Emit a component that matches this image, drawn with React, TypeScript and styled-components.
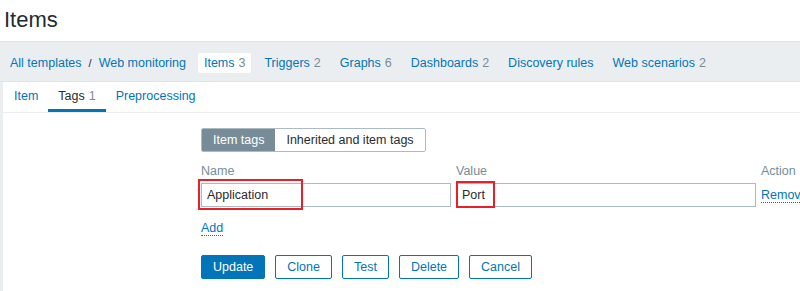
import React from 'react';
import styled, { createGlobalStyle } from 'styled-components';

const GlobalStyle = createGlobalStyle`
    html, body {
        margin: 0;
        padding: 0;
        background: #fff;
    }
    body {
        font-family: 'Liberation Sans', Arial, sans-serif;
        font-size: 12px;
        color: #1f2c33;
        overflow: hidden;
    }
`;

const Page = styled.div`
    width: 800px;
    height: 291px;
    overflow: hidden;
`;

const Header = styled.header`
    height: 41px;
    display: flex;
    align-items: center;
    padding: 0 0 2px 4px;
    box-sizing: border-box;
`;

const Title = styled.h1`
    margin: 0;
    font-size: 22px;
    font-weight: normal;
    color: #1f2c33;
`;

const NavBand = styled.nav`
    height: 41px;
    box-sizing: border-box;
    background: #ebeef0;
    border-top: 1px solid #dfe4e7;
    border-bottom: 1px solid #dfe4e7;
    display: flex;
    align-items: center;
    padding: 2px 0 0 4px;
    white-space: nowrap;
    font-size: 12.5px;
`;

const NavItem = styled.a<{ $active?: boolean; $gap?: number }>`
    display: inline-flex;
    align-items: center;
    height: 20px;
    padding: 0 6px;
    margin-right: ${(p) => (p.$gap !== undefined ? p.$gap : 7)}px;
    border-radius: 2px;
    color: #0275b8;
    text-decoration: none;
    background: ${(p) => (p.$active ? '#fff' : 'transparent')};
`;

const Count = styled.span`
    color: #768d99;
    margin-left: 4px;
`;

const Separator = styled.span`
    color: #1f2c33;
    margin: 0 1px 0 1px;
    font-size: 11px;
`;

const Body = styled.div`
    background: #ebeef0;
    padding-left: 3px;
    height: 210px;
`;

const Panel = styled.div`
    background: #fff;
    height: 100%;
`;

const TabBar = styled.div`
    display: flex;
    padding-left: 1px;
    border-bottom: 1px solid #ebeef0;
`;

const Tab = styled.a<{ $active?: boolean }>`
    height: 30px;
    box-sizing: border-box;
    padding: 0 10px;
    display: flex;
    align-items: center;
    border-bottom: 3px solid ${(p) => (p.$active ? '#0275b8' : 'transparent')};
    color: ${(p) => (p.$active ? '#1f2c33' : '#0275b8')};
    text-decoration: none;
    font-size: 12.5px;
`;

const Form = styled.div`
    padding: 15px 0 0 198px;
`;

const Segmented = styled.div`
    display: inline-flex;
    border: 1px solid #acbbc2;
    border-radius: 2px;
    overflow: hidden;
`;

const SegButton = styled.button<{ $active?: boolean }>`
    height: 22px;
    padding: 0 11px;
    border: none;
    font: inherit;
    font-size: 12.5px;
    background: ${(p) => (p.$active ? '#768d99' : '#fff')};
    color: ${(p) => (p.$active ? '#fff' : '#1f2c33')};
`;

const TagTable = styled.div`
    display: grid;
    grid-template-columns: 250px 300px auto;
    column-gap: 5px;
    row-gap: 4px;
    margin-top: 11px;
    width: 620px;
`;

const HeadCell = styled.div`
    line-height: 16px;
    height: 16px;
    color: #768d99;
    font-size: 12.5px;
`;

const Field = styled.div`
    position: relative;
`;

const TextInput = styled.input`
    display: block;
    width: 100%;
    height: 24px;
    box-sizing: border-box;
    border: 1px solid #acbbc2;
    padding: 0 5px;
    font: inherit;
    font-size: 12.5px;
    color: #1f2c33;
    outline: none;
`;

const Highlight = styled.span<{ $l: number; $t: number; $w: number; $h: number }>`
    position: absolute;
    left: ${(p) => p.$l}px;
    top: ${(p) => p.$t}px;
    width: ${(p) => p.$w}px;
    height: ${(p) => p.$h}px;
    box-sizing: border-box;
    border: 2px solid #e8202b;
    pointer-events: none;
`;

const DottedLink = styled.a<{ $tall?: boolean }>`
    display: inline-block;
    line-height: ${(p) => (p.$tall ? 24 : 16)}px;
    color: #0275b8;
    text-decoration: none;
    font-size: 12.5px;
    white-space: nowrap;
    span {
        border-bottom: 1px dotted #0275b8;
    }
`;

const AddRow = styled.div`
    margin-top: 13px;
    height: 16px;
`;

const Buttons = styled.div`
    display: flex;
    gap: 10px;
    margin-top: 19px;
`;

const Btn = styled.button<{ $primary?: boolean }>`
    height: 24px;
    padding: 0 11px;
    border-radius: 2px;
    border: 1px solid #0275b8;
    font: inherit;
    font-size: 12.5px;
    background: ${(p) => (p.$primary ? '#0275b8' : '#fff')};
    color: ${(p) => (p.$primary ? '#fff' : '#0275b8')};
`;

const App = () => {
    return (
        <Page>
            <GlobalStyle />
            <Header>
                <Title>Items</Title>
            </Header>
            <NavBand>
                <NavItem $gap={0}>All templates</NavItem>
                <Separator>/</Separator>
                <NavItem $gap={6}>Web monitoring</NavItem>
                <NavItem $active>
                    Items<Count>3</Count>
                </NavItem>
                <NavItem>
                    Triggers<Count>2</Count>
                </NavItem>
                <NavItem>
                    Graphs<Count>6</Count>
                </NavItem>
                <NavItem>
                    Dashboards<Count>2</Count>
                </NavItem>
                <NavItem>Discovery rules</NavItem>
                <NavItem>
                    Web scenarios<Count>2</Count>
                </NavItem>
            </NavBand>
            <Body>
                <Panel>
                    <TabBar>
                        <Tab>Item</Tab>
                        <Tab $active>
                            Tags<Count>1</Count>
                        </Tab>
                        <Tab>Preprocessing</Tab>
                    </TabBar>
                    <Form>
                        <Segmented>
                            <SegButton $active>Item tags</SegButton>
                            <SegButton>Inherited and item tags</SegButton>
                        </Segmented>
                        <TagTable>
                            <HeadCell>Name</HeadCell>
                            <HeadCell>Value</HeadCell>
                            <HeadCell>Action</HeadCell>
                            <Field>
                                <TextInput defaultValue='Application' />
                                <Highlight $l={-3} $t={-4} $w={105} $h={31} />
                            </Field>
                            <Field>
                                <TextInput defaultValue='Port' />
                                <Highlight $l={0} $t={-2} $w={39} $h={27} />
                            </Field>
                            <DottedLink $tall>
                                <span>Remove</span>
                            </DottedLink>
                        </TagTable>
                        <AddRow>
                            <DottedLink>
                                <span>Add</span>
                            </DottedLink>
                        </AddRow>
                        <Buttons>
                            <Btn $primary>Update</Btn>
                            <Btn>Clone</Btn>
                            <Btn>Test</Btn>
                            <Btn>Delete</Btn>
                            <Btn>Cancel</Btn>
                        </Buttons>
                    </Form>
                </Panel>
            </Body>
        </Page>
    );
};
export default App;
